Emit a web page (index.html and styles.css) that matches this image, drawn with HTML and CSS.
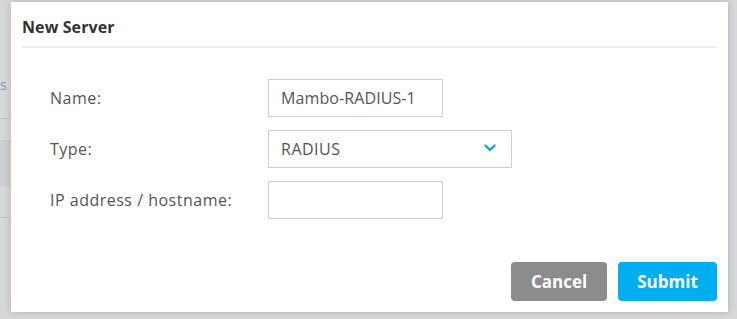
FILE: index.html
```html
<!DOCTYPE html>
<html>
<head>
<meta charset="utf-8">
<link rel="stylesheet" href="styles.css">
</head>
<body>
<div class="page">
  <div class="bg-s">s</div>
  <div class="bg-line l1"></div>
  <div class="bg-band"></div>
  <div class="bg-line l2"></div>
</div>
<div class="modal">
  <div class="modal-header">New Server</div>
  <div class="modal-body">
    <div class="row">
      <label class="lbl">Name:</label>
      <div class="field short">Mambo-RADIUS-1</div>
    </div>
    <div class="row">
      <label class="lbl">Type:</label>
      <div class="field select">RADIUS
        <svg class="chev" width="12" height="8" viewBox="0 0 12 8"><path d="M1.5 1.5 L6 6 L10.5 1.5" fill="none" stroke="#1aa3e0" stroke-width="2.4" stroke-linecap="round" stroke-linejoin="round"/></svg>
      </div>
    </div>
    <div class="row">
      <label class="lbl">IP address / hostname:</label>
      <div class="field short"></div>
    </div>
  </div>
  <div class="modal-footer">
    <button class="btn cancel">Cancel</button>
    <button class="btn submit">Submit</button>
  </div>
</div>
</body>
</html>
```
FILE: styles.css
```css
html, body { margin: 0; padding: 0; }
body {
  width: 737px;
  height: 319px;
  background: #d6d8da;
  font-family: "Open Sans", "Noto Sans", sans-serif;
  position: relative;
  overflow: hidden;
}
.page { position: absolute; left: 0; top: 0; width: 11px; height: 319px; }
.bg-s { position: absolute; left: 0; top: 77px; font-size: 14px; line-height: 16px; color: #8a97a6; }
.bg-line { position: absolute; left: 0; width: 10px; height: 1px; background: #c2c4c7; }
.l1 { top: 118px; }
.l2 { top: 217px; }
.bg-band { position: absolute; left: 0; top: 140px; width: 10px; height: 46px; background: #cdd0d3; }
.modal {
  position: absolute;
  left: 11px;
  top: 2px;
  width: 717px;
  height: 310px;
  background: #fff;
  box-shadow: 0 0 8px rgba(0,0,0,0.18);
  display: flex;
  flex-direction: column;
}
.modal-header {
  margin: 0 11px;
  height: 46px;
  border-bottom: 2px solid #eeeeee;
  font-size: 16px;
  letter-spacing: 0.1px;
  font-weight: 700;
  color: #333;
  display: flex;
  align-items: center;
  box-sizing: border-box;
  padding-top: 6px;
}
.modal-body {
  padding: 31px 0 0 39px;
  display: flex;
  flex-direction: column;
  gap: 13px;
  flex: 1;
}
.row { display: flex; align-items: center; height: 38px; }
.lbl { width: 218px; font-size: 16px; letter-spacing: 0.5px; color: #555; }
.field {
  box-sizing: border-box;
  height: 38px;
  border: 1px solid #cfcfcf;
  padding: 0 12px;
  font-size: 16px;
  letter-spacing: 0.1px;
  color: #555;
  display: flex;
  align-items: center;
}
.short { width: 175px; }
.select { width: 244px; position: relative; letter-spacing: 0.5px; }
.chev { position: absolute; right: 15px; top: 13px; }
.modal-footer {
  display: flex;
  justify-content: flex-end;
  gap: 11px;
  padding: 0 11px 11px 0;
}
.btn {
  height: 39px;
  border: none;
  border-radius: 4px;
  color: #fff;
  font-family: "Open Sans", "Noto Sans", sans-serif;
  font-size: 17px;
  font-weight: 700;
  padding: 0;
}
.cancel { width: 96px; background: #8b8c8e; }
.submit { width: 99px; background: #00aeef; }
```
